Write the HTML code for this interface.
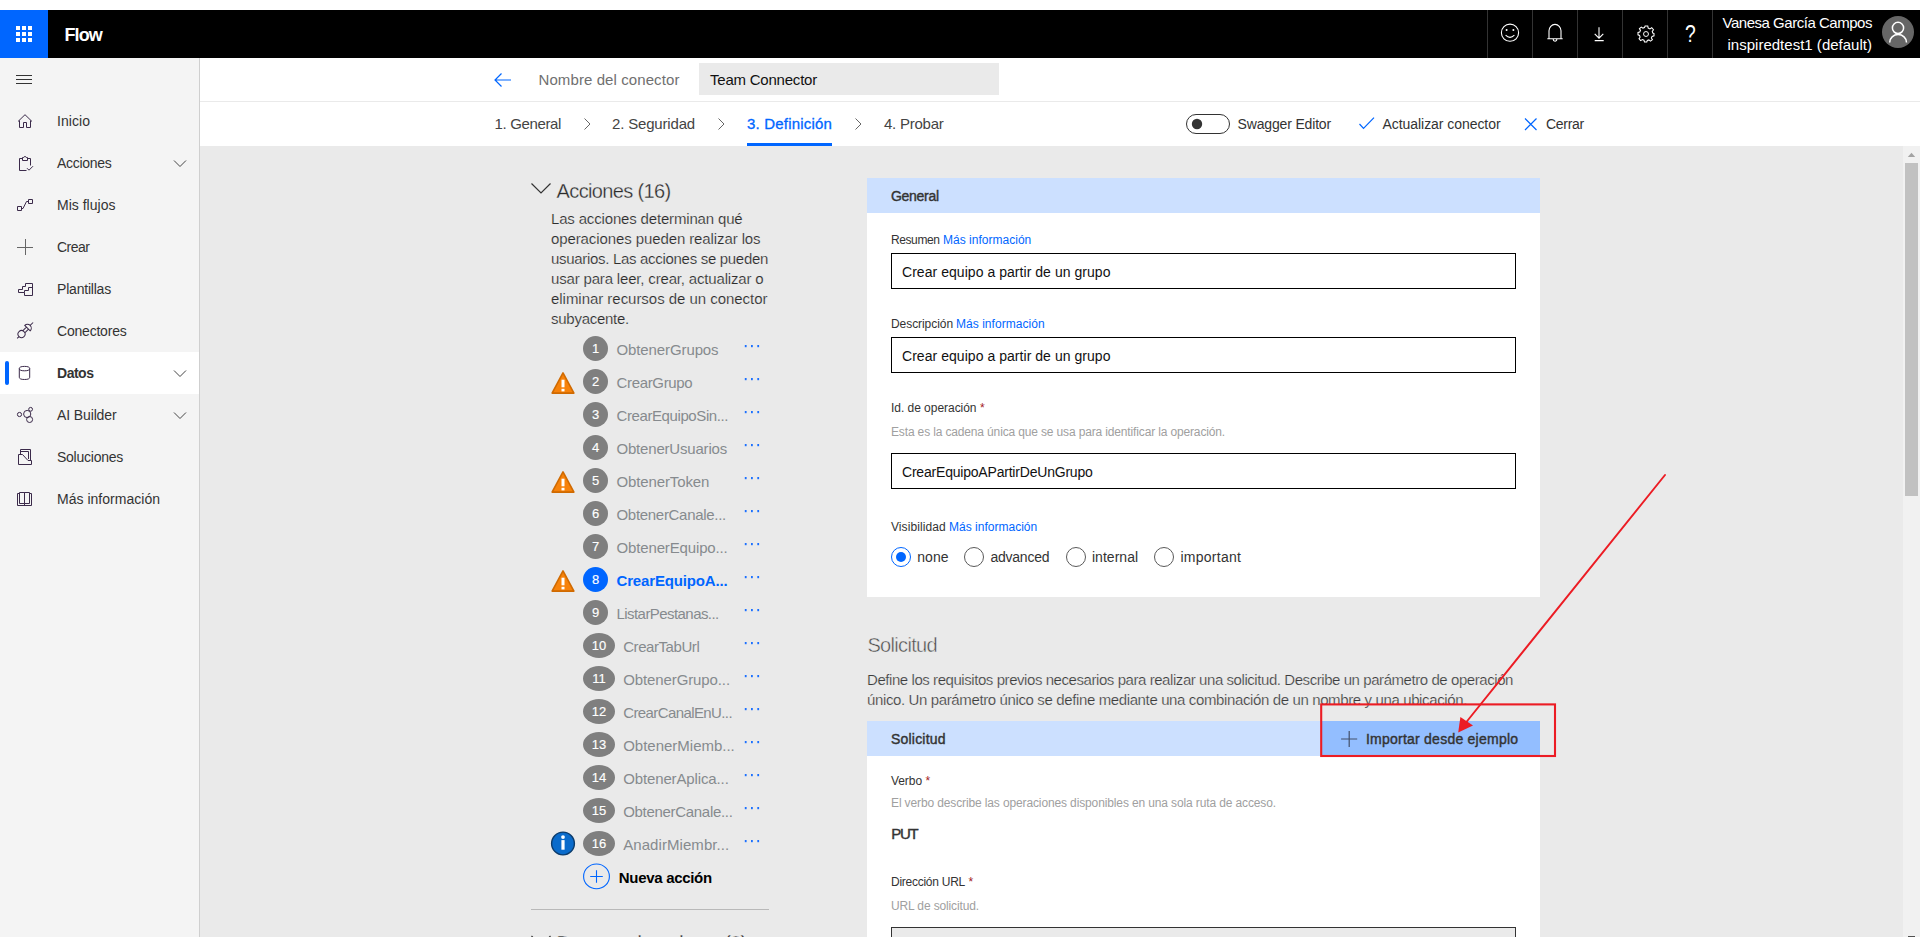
<!DOCTYPE html>
<html lang="es"><head><meta charset="utf-8"><title>Flow - Team Connector</title>
<style>
*{box-sizing:border-box;margin:0;padding:0}
html,body{width:1920px;height:937px;overflow:hidden;background:#fff}
body{position:relative;font-family:"Liberation Sans",sans-serif;font-size:14px;color:#333}
.sb{-webkit-text-stroke:.4px currentColor}
.t{position:absolute;white-space:pre;line-height:20px;height:20px;display:block}
.abs{position:absolute}
header{position:absolute;left:0;top:10px;width:1920px;height:48px;background:#000}
.waffle{position:absolute;left:0;top:0;width:48px;height:48px;background:#0066ff}
.hdiv{position:absolute;top:0;width:1px;height:48px;background:#333}
nav{position:absolute;left:0;top:58px;width:200px;height:879px;background:#f4f4f4;border-right:1px solid #cfcfcf}
.navsel{position:absolute;left:0;top:294px;width:199px;height:42px;background:#fff}
.navsel i{position:absolute;left:5px;top:9px;width:4px;height:24px;background:#0066ff;border-radius:2px}
.bar1{position:absolute;left:200px;top:58px;width:1720px;height:44px;background:#fff;border-bottom:1px solid #eaeaea}
.bar2{position:absolute;left:200px;top:102px;width:1720px;height:44px;background:#fff}
main{position:absolute;left:200px;top:146px;width:1720px;height:791px;background:#eaeaea;overflow:hidden}
.namebox{position:absolute;left:699px;top:63px;width:300px;height:32px;background:#eaeaea}
.card{position:absolute;background:#fff}
.band{position:absolute;background:#cce0ff}
.inp{position:absolute;left:891px;width:625px;height:36px;border:1px solid #000;background:#fff}
.num{position:absolute;height:25px;border-radius:50%;background:#7f7f7f;color:#fff;font-weight:400;-webkit-text-stroke:.15px #fff;font-size:13px;line-height:25px;text-align:center}
.radio{position:absolute;width:20px;height:20px;border-radius:50%;border:1px solid #5a5a5a;background:#fff}
svg{position:absolute;overflow:visible}
h1,h2,h3{font-weight:400}
button{background:none;border:0;font-family:inherit;text-align:left;color:#333}
</style></head><body>
<header>
<div class="waffle"><svg width="48" height="48" viewBox="0 0 48 48" style="left:0;top:0"><rect x="16" y="16" width="4" height="4" fill="#fff"/><rect x="16" y="22" width="4" height="4" fill="#fff"/><rect x="16" y="28" width="4" height="4" fill="#fff"/><rect x="22" y="16" width="4" height="4" fill="#fff"/><rect x="22" y="22" width="4" height="4" fill="#fff"/><rect x="22" y="28" width="4" height="4" fill="#fff"/><rect x="28" y="16" width="4" height="4" fill="#fff"/><rect x="28" y="22" width="4" height="4" fill="#fff"/><rect x="28" y="28" width="4" height="4" fill="#fff"/></svg></div>
<div class="hdiv" style="left:1487px"></div>
<div class="hdiv" style="left:1532px"></div>
<div class="hdiv" style="left:1577px"></div>
<div class="hdiv" style="left:1622px"></div>
<div class="hdiv" style="left:1667px"></div>
<div class="hdiv" style="left:1712px"></div>
<svg width="1920" height="48" viewBox="0 0 1920 48" style="left:0;top:0" fill="none" stroke="#fff" stroke-width="1.1">
<circle cx="1510" cy="22.7" r="8.6"/>
<circle cx="1506.6" cy="20" r="1" fill="#fff" stroke="none"/><circle cx="1513.4" cy="20" r="1" fill="#fff" stroke="none"/>
<path d="M1505.6 25.2 Q1510 29.6 1514.4 25.2"/>
<path d="M1547.3 28.7 H1562.7 M1549 28.5 V20.8 a6 6.4 0 0 1 12 0 V28.5 M1553.2 29.3 a1.8 1.9 0 0 0 3.6 0"/>
<path d="M1599 17.3 V28 M1594.7 23.9 L1599 28.2 L1603.3 23.9 M1594.7 30.6 H1603.7"/>
<g transform="translate(1646 24) scale(0.88)"><circle r="2.8"/>
<path d="M-1.5 -8.5 H1.5 L2 -6.2 L4 -5.3 L6 -6.6 L8 -4.4 L6.6 -2.4 L7.2 -0.6 L8.6 0 V2.6 L6.4 3.2 L5.6 5 L6.8 7 L4.6 8.6 L2.8 7.2 L1 7.8 L0.4 9.6 H-2.2 L-2.8 7.6 L-4.6 6.8 L-6.6 8 L-8.4 5.8 L-7.2 4 L-7.8 2.2 L-9.6 1.4 V-1.2 L-7.6 -1.8 L-6.8 -3.6 L-8 -5.6 L-5.8 -7.4 L-4 -6.2 L-2.2 -6.8 Z" transform="translate(0.5 -0.5)" stroke-width="1.2"/></g>
<circle cx="1898" cy="22" r="16" fill="#666" stroke="none"/>
<circle cx="1898" cy="17.9" r="5.6" stroke-width="1.5"/>
<path d="M1889.7 32.4 a8.4 7.8 0 0 1 16.8 0" stroke-width="1.5"/>
</svg>
<h1 class="t" style="left:64.5px;top:14.76px;font-size:18px;font-weight:700;color:#fff;letter-spacing:-0.875px;">Flow</h1>
<span class="t" style="left:1684.6px;top:13.63px;font-size:23px;color:#fff;transform:scaleX(.84);transform-origin:0 0;">?</span>
<span class="t" style="left:1722.5px;top:3.10px;font-size:15px;color:#fff;letter-spacing:-0.473px;">Vanesa García Campos</span>
<span class="t" style="left:1727.5px;top:25.20px;font-size:15px;color:#fff;letter-spacing:0.011px;">inspiredtest1 (default)</span>
</header>
<nav>
<div class="navsel"><i></i></div>
<svg width="200" height="879" viewBox="0 58 200 879" style="left:0;top:0" fill="none" stroke="#3b2a4a" stroke-width="1">
<path d="M16 75.5 H32 M16 79.5 H32 M16 83.5 H32" stroke="#333"/>
<!-- home -->
<path d="M18 121.5 L25 114.7 L32 121.5 M19.5 120.5 V127.5 H23.5 V122.5 H26.5 V127.5 H30.5 V120.5"/>
<!-- clipboard -->
<path d="M22.5 158.5 H19.5 V170.5 H26.5 M27.5 158.5 H30.5 V165.5 M22.5 160.5 V157.5 H23.7 a1.4 1.6 0 0 1 2.6 0 H27.5 V160.5 Z M27 168.2 L29 170.2 L33 166.2"/>
<!-- flow -->
<path d="M17.5 206.5 h4 v4 h-4 Z M28.5 199.5 h4 v4 h-4 Z M21.5 208.5 L23 208.5 L26.5 201.5 L28.5 201.5"/>
<!-- plus -->
<path d="M17 247.5 H33 M25.5 239 V255" stroke="#666"/>
<!-- templates -->
<path d="M18.5 289.5 H22.5 V286.5 H25.5 V283.5 H32.5 V295.5 H24.5 V292.5 H18.5 Z M24.5 292.5 V290.5 H28.5 V287.5 H32.5"/>
<!-- connectors -->
<g transform="translate(25.2 330.4) rotate(-45)"><circle cx="-5.2" cy="0" r="3.5"/><path d="M-11.4 0 H-8.7 M-1.7 -1.5 H3.2 M-1.7 1.5 H3.2 M3.2 -3.8 A3.8 3.8 0 0 1 3.2 3.8 Z M7 0 H11.2"/></g>
<!-- data -->
<ellipse cx="24.5" cy="368.6" rx="5.2" ry="2.2"/>
<path d="M19.3 368.6 V377.3 a5.2 2.2 0 0 0 10.4 0 V368.6"/>
<!-- ai builder -->
<circle cx="19.5" cy="414.5" r="2.1"/><circle cx="27.2" cy="414" r="3.6"/><circle cx="30.6" cy="409.3" r="1.9"/><circle cx="29.6" cy="419.5" r="3"/>
<!-- solutions -->
<path d="M18.5 454.5 H22.5 L28 460.5 H31.5 V464.5 H18.5 Z M20.5 454.5 V449.5 H30.5 V460.5 M20.5 451.5 H28.5 V459"/>
<!-- learn -->
<path d="M19.5 493.5 H17.5 V505.5 H31.5 V493.5 H29.5 M19.5 492.5 H24.5 V503.5 H19.5 Z M24.5 492.5 H29.5 V503.5 H24.5 Z M24.5 503.5 V505.5"/>
<!-- chevrons -->
<path d="M174 160.5 L180 166.5 L186 160.5 M174 370.5 L180 376.5 L186 370.5 M174 412.5 L180 418.5 L186 412.5" stroke="#444"/>
</svg>
<a class="t" style="left:57px;top:52.65px;font-size:14px;letter-spacing:0.052px;">Inicio</a>
<a class="t" style="left:57px;top:94.65px;font-size:14px;letter-spacing:-0.289px;">Acciones</a>
<a class="t" style="left:57px;top:136.65px;font-size:14px;letter-spacing:0.014px;">Mis flujos</a>
<a class="t" style="left:57px;top:178.65px;font-size:14px;letter-spacing:-0.503px;">Crear</a>
<a class="t" style="left:57px;top:220.65px;font-size:14px;letter-spacing:-0.203px;">Plantillas</a>
<a class="t" style="left:57px;top:262.65px;font-size:14px;letter-spacing:-0.209px;">Conectores</a>
<a class="t" style="left:57px;top:304.65px;font-size:14px;font-weight:700;letter-spacing:-0.481px;">Datos</a>
<a class="t" style="left:57px;top:346.65px;font-size:14px;letter-spacing:-0.120px;">AI Builder</a>
<a class="t" style="left:57px;top:388.65px;font-size:14px;letter-spacing:-0.250px;">Soluciones</a>
<a class="t" style="left:57px;top:430.65px;font-size:14px;letter-spacing:0.020px;">Más información</a>
</nav>
<div class="bar1"></div><div class="bar2"></div>
<div class="abs" style="left:0;top:0">
<div class="namebox"></div>
<svg width="1920" height="150" viewBox="0 0 1920 150" style="left:0;top:0" fill="none" stroke="#0066ff" stroke-width="1.2">
<path d="M495 80 H511 M501.5 73.5 L495 80 L501.5 86.5"/>
<path d="M584.5 118.5 L590 124 L584.5 129.5 M718.5 118.5 L724 124 L718.5 129.5 M855.5 118.5 L861 124 L855.5 129.5" stroke="#666" stroke-width="1"/>
<rect x="1186.5" y="114.5" width="43" height="19" rx="9.5" stroke="#333" stroke-width="1" fill="#fff"/>
<circle cx="1197" cy="124" r="5.2" fill="#333" stroke="none"/>
<path d="M1359.5 124 L1363.5 128.3 L1374 117.7"/>
<path d="M1525 118.5 L1536.5 130 M1536.5 118.5 L1525 130"/>
</svg>
<div class="abs" style="left:747px;top:143px;width:85px;height:3px;background:#0066ff"></div>
<label class="t" style="left:538.5px;top:70.30px;font-size:15px;color:#707070;letter-spacing:0.093px;">Nombre del conector</label>
<span class="t" style="left:710px;top:70.30px;font-size:15px;color:#111;letter-spacing:-0.219px;">Team Connector</span>
<a class="t" style="left:494.6px;top:114.30px;font-size:15px;color:#444;letter-spacing:-0.355px;">1. General</a>
<a class="t" style="left:612px;top:114.30px;font-size:15px;color:#444;letter-spacing:-0.173px;">2. Seguridad</a>
<a class="t" style="left:747px;top:114.30px;font-size:15px;color:#0066ff;letter-spacing:0.189px;-webkit-text-stroke:0.3px #0066ff;">3. Definición</a>
<a class="t" style="left:884px;top:114.30px;font-size:15px;color:#444;letter-spacing:-0.245px;">4. Probar</a>
<label class="t" style="left:1237.5px;top:113.95px;font-size:14px;letter-spacing:-0.158px;">Swagger Editor</label>
<button class="t" style="left:1382.5px;top:113.95px;font-size:14px;letter-spacing:-0.056px;">Actualizar conector</button>
<button class="t" style="left:1546px;top:113.95px;font-size:14px;letter-spacing:-0.279px;">Cerrar</button>
</div>
<main><div class="abs" style="left:-200px;top:-146px">
<svg width="300" height="800" viewBox="500 146 300 800" style="left:500px;top:146px" fill="none" stroke="#333" stroke-width="1.2"><path d="M531.5 183.5 L541 193 L550.5 183.5"/><path d="M531.5 936 L541 945.5 L550.5 936"/></svg>
<h2 class="t" style="left:556.6px;top:180.57px;font-size:20px;color:#2b2b2b;letter-spacing:-0.637px;-webkit-text-stroke:.3px #eaeaea;">Acciones (16)</h2>
<p class="t" style="left:551px;top:208.60px;font-size:15px;color:#2e2e2e;letter-spacing:-0.166px;-webkit-text-stroke:.18px #eaeaea;">Las acciones determinan qué</p>
<p class="t" style="left:551px;top:228.60px;font-size:15px;color:#2e2e2e;letter-spacing:-0.101px;-webkit-text-stroke:.18px #eaeaea;">operaciones pueden realizar los</p>
<p class="t" style="left:551px;top:248.60px;font-size:15px;color:#2e2e2e;letter-spacing:-0.307px;-webkit-text-stroke:.18px #eaeaea;">usuarios. Las acciones se pueden</p>
<p class="t" style="left:551px;top:268.60px;font-size:15px;color:#2e2e2e;letter-spacing:-0.170px;-webkit-text-stroke:.18px #eaeaea;">usar para leer, crear, actualizar o</p>
<p class="t" style="left:551px;top:288.60px;font-size:15px;color:#2e2e2e;letter-spacing:-0.035px;-webkit-text-stroke:.18px #eaeaea;">eliminar recursos de un conector</p>
<p class="t" style="left:551px;top:308.60px;font-size:15px;color:#2e2e2e;letter-spacing:-0.263px;-webkit-text-stroke:.18px #eaeaea;">subyacente.</p>
<div class="num" style="left:583px;top:336px;width:25px;background:#7f7f7f">1</div>
<span class="t" style="left:616.5px;top:340.10px;font-size:15px;color:#868a8e;letter-spacing:-0.107px;">ObtenerGrupos</span>
<div class="num" style="left:583px;top:369px;width:25px;background:#7f7f7f">2</div>
<span class="t" style="left:616.5px;top:373.10px;font-size:15px;color:#868a8e;letter-spacing:-0.340px;">CrearGrupo</span>
<div class="num" style="left:583px;top:402px;width:25px;background:#7f7f7f">3</div>
<span class="t" style="left:616.5px;top:406.10px;font-size:15px;color:#868a8e;letter-spacing:-0.400px;">CrearEquipoSin...</span>
<div class="num" style="left:583px;top:435px;width:25px;background:#7f7f7f">4</div>
<span class="t" style="left:616.5px;top:439.10px;font-size:15px;color:#868a8e;letter-spacing:-0.193px;">ObtenerUsuarios</span>
<div class="num" style="left:583px;top:468px;width:25px;background:#7f7f7f">5</div>
<span class="t" style="left:616.5px;top:472.10px;font-size:15px;color:#868a8e;letter-spacing:-0.120px;">ObtenerToken</span>
<div class="num" style="left:583px;top:501px;width:25px;background:#7f7f7f">6</div>
<span class="t" style="left:616.5px;top:505.10px;font-size:15px;color:#868a8e;letter-spacing:-0.303px;">ObtenerCanale...</span>
<div class="num" style="left:583px;top:534px;width:25px;background:#7f7f7f">7</div>
<span class="t" style="left:616.5px;top:538.10px;font-size:15px;color:#868a8e;letter-spacing:-0.145px;">ObtenerEquipo...</span>
<div class="num" style="left:583px;top:567px;width:25px;background:#0066ff">8</div>
<span class="t" style="left:616.5px;top:571.10px;font-size:15px;font-weight:700;color:#0066ff;letter-spacing:-0.151px;">CrearEquipoA...</span>
<div class="num" style="left:583px;top:600px;width:25px;background:#7f7f7f">9</div>
<span class="t" style="left:616.5px;top:604.10px;font-size:15px;color:#868a8e;letter-spacing:-0.561px;">ListarPestanas...</span>
<div class="num" style="left:583px;top:633px;width:32px;background:#7f7f7f">10</div>
<span class="t" style="left:623.2px;top:637.10px;font-size:15px;color:#868a8e;letter-spacing:-0.433px;">CrearTabUrl</span>
<div class="num" style="left:583px;top:666px;width:32px;background:#7f7f7f">11</div>
<span class="t" style="left:623.2px;top:670.10px;font-size:15px;color:#868a8e;letter-spacing:-0.107px;">ObtenerGrupo...</span>
<div class="num" style="left:583px;top:699px;width:32px;background:#7f7f7f">12</div>
<span class="t" style="left:623.2px;top:703.10px;font-size:15px;color:#868a8e;letter-spacing:-0.599px;">CrearCanalEnU...</span>
<div class="num" style="left:583px;top:732px;width:32px;background:#7f7f7f">13</div>
<span class="t" style="left:623.2px;top:736.10px;font-size:15px;color:#868a8e;letter-spacing:-0.008px;">ObtenerMiemb...</span>
<div class="num" style="left:583px;top:765px;width:32px;background:#7f7f7f">14</div>
<span class="t" style="left:623.2px;top:769.10px;font-size:15px;color:#868a8e;letter-spacing:-0.129px;">ObtenerAplica...</span>
<div class="num" style="left:583px;top:798px;width:32px;background:#7f7f7f">15</div>
<span class="t" style="left:623.2px;top:802.10px;font-size:15px;color:#868a8e;letter-spacing:-0.303px;">ObtenerCanale...</span>
<div class="num" style="left:583px;top:831px;width:32px;background:#7f7f7f">16</div>
<span class="t" style="left:623.2px;top:835.10px;font-size:15px;color:#868a8e;letter-spacing:0.070px;">AnadirMiembr...</span>
<svg width="300" height="800" viewBox="500 146 300 800" style="left:500px;top:146px"><rect x="744.8" y="345" width="1.8" height="2.2" fill="#1a6fff"/><rect x="751" y="345" width="1.8" height="2.2" fill="#1a6fff"/><rect x="757.3" y="345" width="1.8" height="2.2" fill="#1a6fff"/><rect x="744.8" y="378" width="1.8" height="2.2" fill="#1a6fff"/><rect x="751" y="378" width="1.8" height="2.2" fill="#1a6fff"/><rect x="757.3" y="378" width="1.8" height="2.2" fill="#1a6fff"/><path d="M563 372.9 L573.9 393.1 H552.1 Z" fill="#f7820a" stroke="#d06a00" stroke-width="1.6" stroke-linejoin="round"/><rect x="561.5" y="379.7" width="3" height="7.6" fill="#fff"/><rect x="561.5" y="388.8" width="3" height="2.6" fill="#fff"/><rect x="744.8" y="411" width="1.8" height="2.2" fill="#1a6fff"/><rect x="751" y="411" width="1.8" height="2.2" fill="#1a6fff"/><rect x="757.3" y="411" width="1.8" height="2.2" fill="#1a6fff"/><rect x="744.8" y="444" width="1.8" height="2.2" fill="#1a6fff"/><rect x="751" y="444" width="1.8" height="2.2" fill="#1a6fff"/><rect x="757.3" y="444" width="1.8" height="2.2" fill="#1a6fff"/><rect x="744.8" y="477" width="1.8" height="2.2" fill="#1a6fff"/><rect x="751" y="477" width="1.8" height="2.2" fill="#1a6fff"/><rect x="757.3" y="477" width="1.8" height="2.2" fill="#1a6fff"/><path d="M563 471.9 L573.9 492.1 H552.1 Z" fill="#f7820a" stroke="#d06a00" stroke-width="1.6" stroke-linejoin="round"/><rect x="561.5" y="478.7" width="3" height="7.6" fill="#fff"/><rect x="561.5" y="487.8" width="3" height="2.6" fill="#fff"/><rect x="744.8" y="510" width="1.8" height="2.2" fill="#1a6fff"/><rect x="751" y="510" width="1.8" height="2.2" fill="#1a6fff"/><rect x="757.3" y="510" width="1.8" height="2.2" fill="#1a6fff"/><rect x="744.8" y="543" width="1.8" height="2.2" fill="#1a6fff"/><rect x="751" y="543" width="1.8" height="2.2" fill="#1a6fff"/><rect x="757.3" y="543" width="1.8" height="2.2" fill="#1a6fff"/><rect x="744.8" y="576" width="1.8" height="2.2" fill="#1a6fff"/><rect x="751" y="576" width="1.8" height="2.2" fill="#1a6fff"/><rect x="757.3" y="576" width="1.8" height="2.2" fill="#1a6fff"/><path d="M563 570.9 L573.9 591.1 H552.1 Z" fill="#f7820a" stroke="#d06a00" stroke-width="1.6" stroke-linejoin="round"/><rect x="561.5" y="577.7" width="3" height="7.6" fill="#fff"/><rect x="561.5" y="586.8" width="3" height="2.6" fill="#fff"/><rect x="744.8" y="609" width="1.8" height="2.2" fill="#1a6fff"/><rect x="751" y="609" width="1.8" height="2.2" fill="#1a6fff"/><rect x="757.3" y="609" width="1.8" height="2.2" fill="#1a6fff"/><rect x="744.8" y="642" width="1.8" height="2.2" fill="#1a6fff"/><rect x="751" y="642" width="1.8" height="2.2" fill="#1a6fff"/><rect x="757.3" y="642" width="1.8" height="2.2" fill="#1a6fff"/><rect x="744.8" y="675" width="1.8" height="2.2" fill="#1a6fff"/><rect x="751" y="675" width="1.8" height="2.2" fill="#1a6fff"/><rect x="757.3" y="675" width="1.8" height="2.2" fill="#1a6fff"/><rect x="744.8" y="708" width="1.8" height="2.2" fill="#1a6fff"/><rect x="751" y="708" width="1.8" height="2.2" fill="#1a6fff"/><rect x="757.3" y="708" width="1.8" height="2.2" fill="#1a6fff"/><rect x="744.8" y="741" width="1.8" height="2.2" fill="#1a6fff"/><rect x="751" y="741" width="1.8" height="2.2" fill="#1a6fff"/><rect x="757.3" y="741" width="1.8" height="2.2" fill="#1a6fff"/><rect x="744.8" y="774" width="1.8" height="2.2" fill="#1a6fff"/><rect x="751" y="774" width="1.8" height="2.2" fill="#1a6fff"/><rect x="757.3" y="774" width="1.8" height="2.2" fill="#1a6fff"/><rect x="744.8" y="807" width="1.8" height="2.2" fill="#1a6fff"/><rect x="751" y="807" width="1.8" height="2.2" fill="#1a6fff"/><rect x="757.3" y="807" width="1.8" height="2.2" fill="#1a6fff"/><rect x="744.8" y="840" width="1.8" height="2.2" fill="#1a6fff"/><rect x="751" y="840" width="1.8" height="2.2" fill="#1a6fff"/><rect x="757.3" y="840" width="1.8" height="2.2" fill="#1a6fff"/><circle cx="563" cy="843.5" r="11.4" fill="#0a6bcb" stroke="#0c3c6c" stroke-width="1.4"/><rect x="561.4" y="840.1" width="3.2" height="9.6" fill="#fff"/><circle cx="563" cy="837.1" r="1.9" fill="#fff"/><ellipse cx="596.5" cy="876.4" rx="12.9" ry="12.4" fill="none" stroke="#0066ff" stroke-width="1.1"/><path d="M590.2 876.5 H602.8 M596.5 870.2 V882.8" stroke="#0066ff" stroke-width="1.1" fill="none"/><rect x="531" y="909" width="238" height="1" fill="#b9b9b9"/></svg>
<button class="t" style="left:618.8px;top:867.80px;font-size:15px;font-weight:700;color:#000;letter-spacing:-0.310px;">Nueva acción</button>
<h2 class="t" style="left:556.6px;top:933.07px;font-size:20px;color:#2b2b2b;letter-spacing:-0.673px;-webkit-text-stroke:.3px #eaeaea;">Desencadenadores (0)</h2>
<div class="card" style="left:867px;top:178px;width:673px;height:419px"></div>
<div class="band" style="left:867px;top:178px;width:673px;height:35px"></div>
<h3 class="t sb" style="left:891px;top:185.85px;font-size:14px;letter-spacing:-0.302px;">General</h3>
<label class="t" style="left:891px;top:229.84px;font-size:12px;letter-spacing:-0.408px;">Resumen</label>
<a class="t" style="left:943px;top:229.84px;font-size:12px;color:#0066ff;letter-spacing:0.018px;">Más información</a>
<div class="inp" style="top:253px"></div>
<span class="t" style="left:902px;top:261.95px;font-size:14px;color:#111;letter-spacing:0.045px;">Crear equipo a partir de un grupo</span>
<label class="t" style="left:891px;top:314.04px;font-size:12px;letter-spacing:-0.064px;">Descripción</label>
<a class="t" style="left:955.9px;top:314.04px;font-size:12px;color:#0066ff;letter-spacing:0.058px;">Más información</a>
<div class="inp" style="top:337px"></div>
<span class="t" style="left:902px;top:345.95px;font-size:14px;color:#111;letter-spacing:0.045px;">Crear equipo a partir de un grupo</span>
<label class="t" style="left:891px;top:397.54px;font-size:12px;letter-spacing:-0.035px;">Id. de operación</label>
<span class="t" style="left:980px;top:397.54px;font-size:12px;color:#a31a22;">*</span>
<span class="t" style="left:891px;top:421.84px;font-size:12px;color:#a0a0a0;letter-spacing:-0.147px;">Esta es la cadena única que se usa para identificar la operación.</span>
<div class="inp" style="top:453px"></div>
<span class="t" style="left:902px;top:461.95px;font-size:14px;color:#111;letter-spacing:-0.203px;">CrearEquipoAPartirDeUnGrupo</span>
<label class="t" style="left:891px;top:516.54px;font-size:12px;letter-spacing:0.081px;">Visibilidad</label>
<a class="t" style="left:949px;top:516.54px;font-size:12px;color:#0066ff;letter-spacing:0.011px;">Más información</a>
<div class="radio" style="left:891px;top:547px;border-color:#0066ff"><div class="abs" style="left:4px;top:4px;width:10px;height:10px;border-radius:50%;background:#0066ff"></div></div>
<div class="radio" style="left:963.7px;top:547px"></div>
<div class="radio" style="left:1065.8px;top:547px"></div>
<div class="radio" style="left:1153.7px;top:547px"></div>
<label class="t" style="left:917.2px;top:547.15px;font-size:14px;letter-spacing:0.061px;">none</label>
<label class="t" style="left:990.5px;top:547.15px;font-size:14px;letter-spacing:-0.252px;">advanced</label>
<label class="t" style="left:1091.9px;top:547.15px;font-size:14px;letter-spacing:0.047px;">internal</label>
<label class="t" style="left:1180.4px;top:547.15px;font-size:14px;letter-spacing:0.282px;">important</label>
<h2 class="t" style="left:867.4px;top:635.47px;font-size:20px;color:#4a4a4a;letter-spacing:-0.668px;-webkit-text-stroke:.45px #eaeaea;">Solicitud</h2>
<p class="t" style="left:867px;top:669.50px;font-size:15px;color:#3c3c3c;letter-spacing:-0.435px;-webkit-text-stroke:.22px #eaeaea;">Define los requisitos previos necesarios para realizar una solicitud. Describe un parámetro de operación</p>
<p class="t" style="left:867px;top:690.40px;font-size:15px;color:#3c3c3c;letter-spacing:-0.375px;-webkit-text-stroke:.22px #eaeaea;">único. Un parámetro único se define mediante una combinación de un nombre y una ubicación.</p>
<div class="card" style="left:867px;top:721px;width:673px;height:230px"></div>
<div class="band" style="left:867px;top:721px;width:673px;height:35px"></div>
<div class="abs" style="left:1321px;top:721px;width:219px;height:35px;background:#93beff"></div>
<svg width="20" height="20" viewBox="0 0 20 20" style="left:1339px;top:729px" stroke="#44506a" stroke-width="1.2" fill="none"><path d="M2.1 10 H18.2 M10.2 2.1 V17.9"/></svg>
<h3 class="t sb" style="left:891px;top:729.15px;font-size:14px;letter-spacing:0.198px;">Solicitud</h3>
<button class="t sb" style="left:1365.9px;top:729.15px;font-size:14px;letter-spacing:0.242px;">Importar desde ejemplo</button>
<label class="t" style="left:891px;top:771.24px;font-size:12px;letter-spacing:-0.072px;">Verbo</label>
<span class="t" style="left:925.5px;top:771.24px;font-size:12px;color:#a31a22;">*</span>
<span class="t" style="left:891px;top:792.64px;font-size:12px;color:#a0a0a0;letter-spacing:-0.127px;">El verbo describe las operaciones disponibles en una sola ruta de acceso.</span>
<span class="t sb" style="left:891.2px;top:824.40px;font-size:15px;letter-spacing:-1.200px;">PUT</span>
<label class="t" style="left:891px;top:871.84px;font-size:12px;letter-spacing:-0.258px;">Dirección URL</label>
<span class="t" style="left:968.5px;top:871.84px;font-size:12px;color:#a31a22;">*</span>
<span class="t" style="left:891px;top:896.14px;font-size:12px;color:#a0a0a0;letter-spacing:-0.133px;">URL de solicitud.</span>
<div class="inp" style="top:927px;background:#eaeaea;border-color:#333"></div>
<svg width="400" height="320" viewBox="1300 460 400 320" style="left:1300px;top:460px" fill="none" stroke="#ec1c24">
<rect x="1321.2" y="704.4" width="233.8" height="51.6" stroke-width="2.1"/>
<path d="M1665 475 L1466 722.5" stroke-width="1.9" stroke-linecap="round"/>
<path d="M1458.2 732.4 L1460.4 717 L1473 725.5 Z" fill="#ec1c24" stroke="none"/>
</svg>
<div class="abs" style="left:1903px;top:146px;width:17px;height:791px;background:#f1f1f1"></div>
<div class="abs" style="left:1905px;top:163px;width:13px;height:333px;background:#c1c1c1"></div>
<svg width="17" height="17" viewBox="0 0 17 17" style="left:1903px;top:146px"><path d="M4.8 11 L8.5 6.8 L12.2 11 Z" fill="#a3a3a3"/></svg>
<div class="abs" style="left:1908px;top:936px;width:7px;height:1px;background:#505050"></div>
</div></main>
</body></html>
